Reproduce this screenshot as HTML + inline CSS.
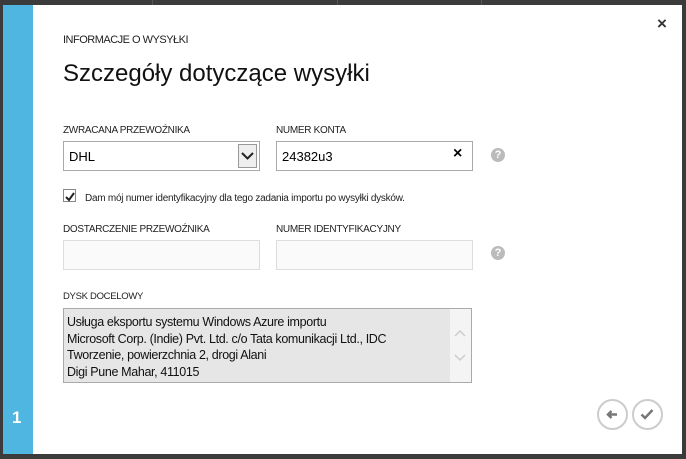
<!DOCTYPE html>
<html><head><meta charset="utf-8"><style>
body{margin:0;width:686px;height:459px;background:#3b3b3b;position:relative;overflow:hidden;font-family:"Liberation Sans",sans-serif;}
.m{position:absolute;left:3px;top:5px;width:679px;height:449px;background:#fff;}
.bar{position:absolute;left:3px;top:5px;width:30px;height:449px;background:#4fb5e1;}
.n{position:absolute;left:12px;top:408px;color:#fff;font-weight:bold;font-size:17px;}
.a{position:absolute;}
.lbl{font-size:10px;color:#222;letter-spacing:-0.3px;}
.box{position:absolute;border:1px solid #aaa;box-sizing:border-box;background:#fff;}
.q{position:absolute;width:14px;height:14px;border-radius:50%;background:#bbb;color:#fff;font-size:11px;font-weight:bold;text-align:center;line-height:14px;}
.c{position:absolute;width:31px;height:31px;border:2px solid #ccc;border-radius:50%;box-sizing:border-box;}
</style></head><body>
<div class="a" style="left:152px;top:0;width:1px;height:5px;background:#555"></div>
<div class="a" style="left:337px;top:0;width:1px;height:5px;background:#555"></div>
<div class="a" style="left:481px;top:0;width:1px;height:5px;background:#555"></div>
<div class="m"></div>
<div class="bar"></div>
<div class="n">1</div>
<div class="a" style="left:657px;top:14px;font-size:17px;font-weight:bold;color:#333">×</div>
<div class="a" style="left:63px;top:34px;font-size:11px;color:#222;letter-spacing:-0.5px">INFORMACJE O WYSYŁKI</div>
<div class="a" style="left:63px;top:60px;font-size:24px;color:#111">Szczegóły dotyczące wysyłki</div>
<div class="a lbl" style="left:63px;top:125px">ZWRACANA PRZEWOŹNIKA</div>
<div class="a lbl" style="left:276px;top:125px">NUMER KONTA</div>
<div class="box" style="left:63px;top:141px;width:197px;height:30px"></div>
<div class="a" style="left:69px;top:149px;font-size:13px">DHL</div>
<div class="a" style="left:238px;top:144px;width:19px;height:24px;background:#eee;border:1px solid #999;box-sizing:border-box"><svg width="17" height="22"><path d="M3 8l5.5 5.5L14 8" fill="none" stroke="#222" stroke-width="2"/></svg></div>
<div class="box" style="left:276px;top:141px;width:197px;height:30px"></div>
<div class="a" style="left:282px;top:149px;font-size:13px">24382u3</div>
<div class="a" style="left:453px;top:145px;font-size:16px;font-weight:bold">×</div>
<div class="q" style="left:491px;top:148px">?</div>
<div class="a" style="left:63px;top:189px;width:13px;height:13px;border:1px solid #888;box-sizing:border-box"><svg width="12" height="12"><path d="M2 6l3 3 5-7" fill="none" stroke="#222" stroke-width="2"/></svg></div>
<div class="a" style="left:85px;top:193px;font-size:10px;color:#222;letter-spacing:-0.25px">Dam mój numer identyfikacyjny dla tego zadania importu po wysyłki dysków.</div>
<div class="a lbl" style="left:63px;top:224px">DOSTARCZENIE PRZEWOŹNIKA</div>
<div class="a lbl" style="left:276px;top:224px">NUMER IDENTYFIKACYJNY</div>
<div class="box" style="left:63px;top:240px;width:197px;height:30px;border-color:#ddd;background:#fafafa"></div>
<div class="box" style="left:276px;top:240px;width:197px;height:30px;border-color:#ddd;background:#fafafa"></div>
<div class="q" style="left:491px;top:246px">?</div>
<div class="a lbl" style="left:63px;top:291px;font-size:9.5px">DYSK DOCELOWY</div>
<div class="box" style="left:63px;top:308px;width:409px;height:75px;background:#e6e6e6;border-color:#aaa"></div>
<div class="a" style="left:450px;top:309px;width:21px;height:73px;background:#f4f4f4"><svg width="21" height="73"><path d="M5 27l5-5 5 5M5 46l5 5 5-5" fill="none" stroke="#ccc" stroke-width="1.5"/></svg></div>
<div class="a" style="left:67px;top:314px;font-size:12.5px;line-height:16.5px;color:#111;letter-spacing:-0.35px">Usługa eksportu systemu Windows Azure importu<br>Microsoft Corp. (Indie) Pvt. Ltd. c/o Tata komunikacji Ltd., IDC<br>Tworzenie, powierzchnia 2, drogi Alani<br>Digi Pune Mahar, 411015</div>
<div class="c" style="left:597px;top:399px"><svg width="27" height="27"><path d="M18 13.5H9M12.5 10l-3.5 3.5 3.5 3.5" fill="none" stroke="#777" stroke-width="2.5"/></svg></div>
<div class="c" style="left:632px;top:399px"><svg width="27" height="27"><path d="M7.5 13.5l3.5 3.5 7.5-8" fill="none" stroke="#777" stroke-width="2.5"/></svg></div>
</body></html>
